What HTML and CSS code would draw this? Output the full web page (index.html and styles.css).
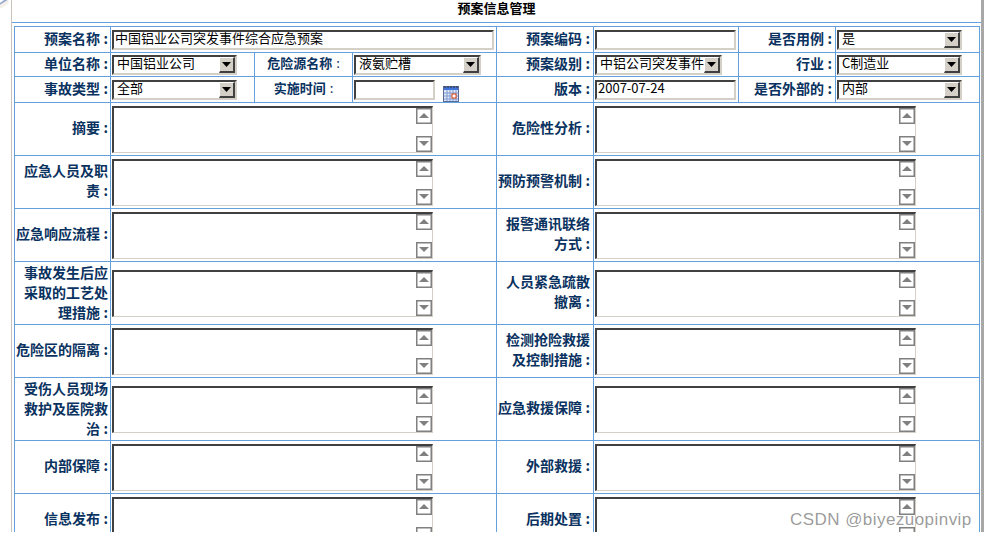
FILE: index.html
```html
<!DOCTYPE html>
<html lang="zh-CN">
<head>
<meta charset="utf-8">
<title>预案信息管理</title>
<link rel="stylesheet" href="styles.css">
</head>
<body>
<div class="screen">
  <div class="gutter">
    <svg class="corner" width="10" height="8" viewBox="0 0 10 8"><path d="M0 5 L8 0 L4 0 L0 3Z" fill="#9aa8d0"/><path d="M0 5 L8 0 L9 3 L2 8 L0 8Z" fill="#f4f2e8"/></svg>
  </div>
  <main class="panel">
    <h1 class="title">预案信息管理</h1>
    <table class="form">
      <colgroup>
        <col class="c96"><col class="c144"><col class="c98"><col class="c144"><col class="c97"><col class="c145"><col class="c97"><col class="c144">
      </colgroup>
      <tr class="h26">
        <th>预案名称&#8197;:</th>
        <td colspan="3"><input class="inp w382" value="中国铝业公司突发事件综合应急预案"></td>
        <th>预案编码&#8197;:</th>
        <td><input class="inp w141" value=""></td>
        <th>是否用例&#8197;:</th>
        <td><div class="sel w125"><select><option>是</option></select><span class="drop"><svg width="9" height="5" viewBox="0 0 9 5"><path d="M0 0H9L4.5 5Z"/></svg></span></div></td>
      </tr>
      <tr class="h24">
        <th>单位名称&#8197;:</th>
        <td><div class="sel w125"><select><option>中国铝业公司</option></select><span class="drop"><svg width="9" height="5" viewBox="0 0 9 5"><path d="M0 0H9L4.5 5Z"/></svg></span></div></td>
        <th class="mid">危险源名称<span class="thin">:</span></th>
        <td><div class="sel w127"><select><option>液氨贮槽</option></select><span class="drop"><svg width="9" height="5" viewBox="0 0 9 5"><path d="M0 0H9L4.5 5Z"/></svg></span></div></td>
        <th>预案级别&#8197;:</th>
        <td><div class="sel w127"><select><option>中铝公司突发事件</option></select><span class="drop"><svg width="9" height="5" viewBox="0 0 9 5"><path d="M0 0H9L4.5 5Z"/></svg></span></div></td>
        <th>行业&#8197;:</th>
        <td><div class="sel w125"><select><option>C制造业</option></select><span class="drop"><svg width="9" height="5" viewBox="0 0 9 5"><path d="M0 0H9L4.5 5Z"/></svg></span></div></td>
      </tr>
      <tr class="h26">
        <th>事故类型&#8197;:</th>
        <td><div class="sel w125"><select><option>全部</option></select><span class="drop"><svg width="9" height="5" viewBox="0 0 9 5"><path d="M0 0H9L4.5 5Z"/></svg></span></div></td>
        <th class="mid">实施时间<span class="thin">:</span></th>
        <td>
          <div class="date">
            <input class="inp w81" value="">
            <svg class="cal" width="16" height="16" viewBox="0 0 16 16">
              <rect x="0.5" y="0.5" width="15" height="15" fill="#dfe8f8" stroke="#5a6a9a"/>
              <rect x="1" y="1" width="14" height="3" fill="#3f73d8"/>
              <path d="M1 7H15M1 10H15M1 13H15M4 4V15M7 4V15M10 4V15M13 4V15" stroke="#7f9ad0" stroke-width="1"/>
              <rect x="9" y="8" width="4" height="4" fill="#fff" stroke="#e0400c"/>
              <path d="M2 0V2M5 0V2M8 0V2M11 0V2M14 0V2" stroke="#333"/>
            </svg>
          </div>
        </td>
        <th>版本&#8197;:</th>
        <td><input class="inp w141" value="2007-07-24"></td>
        <th>是否外部的&#8197;:</th>
        <td><div class="sel w125"><select><option>内部</option></select><span class="drop"><svg width="9" height="5" viewBox="0 0 9 5"><path d="M0 0H9L4.5 5Z"/></svg></span></div></td>
      </tr>
      <tr class="h53">
        <th>摘要&#8197;:</th>
        <td colspan="3"><div class="area"><textarea></textarea><div class="bar"><span class="btn"><svg width="10" height="5" viewBox="0 0 10 5"><path d="M5 0L10 5H0Z"/></svg></span><span class="btn"><svg width="10" height="5" viewBox="0 0 10 5"><path d="M0 0H10L5 5Z"/></svg></span></div></div></td>
        <th>危险性分析&#8197;:</th>
        <td colspan="3"><div class="area"><textarea></textarea><div class="bar"><span class="btn"><svg width="10" height="5" viewBox="0 0 10 5"><path d="M5 0L10 5H0Z"/></svg></span><span class="btn"><svg width="10" height="5" viewBox="0 0 10 5"><path d="M0 0H10L5 5Z"/></svg></span></div></div></td>
      </tr>
      <tr class="h53">
        <th>应急人员及职责&#8197;:</th>
        <td colspan="3"><div class="area"><textarea></textarea><div class="bar"><span class="btn"><svg width="10" height="5" viewBox="0 0 10 5"><path d="M5 0L10 5H0Z"/></svg></span><span class="btn"><svg width="10" height="5" viewBox="0 0 10 5"><path d="M0 0H10L5 5Z"/></svg></span></div></div></td>
        <th>预防预警机制&#8197;:</th>
        <td colspan="3"><div class="area"><textarea></textarea><div class="bar"><span class="btn"><svg width="10" height="5" viewBox="0 0 10 5"><path d="M5 0L10 5H0Z"/></svg></span><span class="btn"><svg width="10" height="5" viewBox="0 0 10 5"><path d="M0 0H10L5 5Z"/></svg></span></div></div></td>
      </tr>
      <tr class="h53">
        <th>应急响应流程&#8197;:</th>
        <td colspan="3"><div class="area"><textarea></textarea><div class="bar"><span class="btn"><svg width="10" height="5" viewBox="0 0 10 5"><path d="M5 0L10 5H0Z"/></svg></span><span class="btn"><svg width="10" height="5" viewBox="0 0 10 5"><path d="M0 0H10L5 5Z"/></svg></span></div></div></td>
        <th>报警通讯联络方式&#8197;:</th>
        <td colspan="3"><div class="area"><textarea></textarea><div class="bar"><span class="btn"><svg width="10" height="5" viewBox="0 0 10 5"><path d="M5 0L10 5H0Z"/></svg></span><span class="btn"><svg width="10" height="5" viewBox="0 0 10 5"><path d="M0 0H10L5 5Z"/></svg></span></div></div></td>
      </tr>
      <tr class="h63">
        <th class="tall">事故发生后应采取的工艺处理措施&#8197;:</th>
        <td colspan="3"><div class="area"><textarea></textarea><div class="bar"><span class="btn"><svg width="10" height="5" viewBox="0 0 10 5"><path d="M5 0L10 5H0Z"/></svg></span><span class="btn"><svg width="10" height="5" viewBox="0 0 10 5"><path d="M0 0H10L5 5Z"/></svg></span></div></div></td>
        <th>人员紧急疏散撤离&#8197;:</th>
        <td colspan="3"><div class="area"><textarea></textarea><div class="bar"><span class="btn"><svg width="10" height="5" viewBox="0 0 10 5"><path d="M5 0L10 5H0Z"/></svg></span><span class="btn"><svg width="10" height="5" viewBox="0 0 10 5"><path d="M0 0H10L5 5Z"/></svg></span></div></div></td>
      </tr>
      <tr class="h53">
        <th>危险区的隔离&#8197;:</th>
        <td colspan="3"><div class="area"><textarea></textarea><div class="bar"><span class="btn"><svg width="10" height="5" viewBox="0 0 10 5"><path d="M5 0L10 5H0Z"/></svg></span><span class="btn"><svg width="10" height="5" viewBox="0 0 10 5"><path d="M0 0H10L5 5Z"/></svg></span></div></div></td>
        <th>检测抢险救援及控制措施&#8197;:</th>
        <td colspan="3"><div class="area"><textarea></textarea><div class="bar"><span class="btn"><svg width="10" height="5" viewBox="0 0 10 5"><path d="M5 0L10 5H0Z"/></svg></span><span class="btn"><svg width="10" height="5" viewBox="0 0 10 5"><path d="M0 0H10L5 5Z"/></svg></span></div></div></td>
      </tr>
      <tr class="h63">
        <th class="tall">受伤人员现场救护及医院救治&#8197;:</th>
        <td colspan="3"><div class="area"><textarea></textarea><div class="bar"><span class="btn"><svg width="10" height="5" viewBox="0 0 10 5"><path d="M5 0L10 5H0Z"/></svg></span><span class="btn"><svg width="10" height="5" viewBox="0 0 10 5"><path d="M0 0H10L5 5Z"/></svg></span></div></div></td>
        <th>应急救援保障&#8197;:</th>
        <td colspan="3"><div class="area"><textarea></textarea><div class="bar"><span class="btn"><svg width="10" height="5" viewBox="0 0 10 5"><path d="M5 0L10 5H0Z"/></svg></span><span class="btn"><svg width="10" height="5" viewBox="0 0 10 5"><path d="M0 0H10L5 5Z"/></svg></span></div></div></td>
      </tr>
      <tr class="h53">
        <th>内部保障&#8197;:</th>
        <td colspan="3"><div class="area"><textarea></textarea><div class="bar"><span class="btn"><svg width="10" height="5" viewBox="0 0 10 5"><path d="M5 0L10 5H0Z"/></svg></span><span class="btn"><svg width="10" height="5" viewBox="0 0 10 5"><path d="M0 0H10L5 5Z"/></svg></span></div></div></td>
        <th>外部救援&#8197;:</th>
        <td colspan="3"><div class="area"><textarea></textarea><div class="bar"><span class="btn"><svg width="10" height="5" viewBox="0 0 10 5"><path d="M5 0L10 5H0Z"/></svg></span><span class="btn"><svg width="10" height="5" viewBox="0 0 10 5"><path d="M0 0H10L5 5Z"/></svg></span></div></div></td>
      </tr>
      <tr class="h53">
        <th>信息发布&#8197;:</th>
        <td colspan="3"><div class="area"><textarea></textarea><div class="bar"><span class="btn"><svg width="10" height="5" viewBox="0 0 10 5"><path d="M5 0L10 5H0Z"/></svg></span><span class="btn"><svg width="10" height="5" viewBox="0 0 10 5"><path d="M0 0H10L5 5Z"/></svg></span></div></div></td>
        <th>后期处置&#8197;:</th>
        <td colspan="3"><div class="area"><textarea></textarea><div class="bar"><span class="btn"><svg width="10" height="5" viewBox="0 0 10 5"><path d="M5 0L10 5H0Z"/></svg></span><span class="btn"><svg width="10" height="5" viewBox="0 0 10 5"><path d="M0 0H10L5 5Z"/></svg></span></div></div></td>
      </tr>
    </table>
    <div class="mark">CSDN @biyezuopinvip</div>
  </main>
</div>
</body>
</html>
```
FILE: styles.css
```css
html, body { margin: 0; padding: 0; background: #fff; }
body { font-family: "Noto Sans CJK SC", "Liberation Sans", sans-serif; overflow: hidden; }
.screen { display: flex; height: 532px; width: 985px; overflow: hidden; position: relative; }
.gutter { width: 11px; flex: none; }
.corner { display: block; }
.panel { flex: none; width: 969px; height: 532px; border-left: 1px solid #c8c4bc; border-right: 3px solid #a8a8a8; overflow: hidden; }
.title { margin: 0; height: 22px; border-bottom: 1px solid #64a0dc; font-size: 13px; line-height: 16px; font-weight: 700; text-align: center; color: #000; }
.form { border-collapse: collapse; table-layout: fixed; width: 966px; margin: 3px 0 0 2px; }
.form th, .form td { border: 1px solid #64a0dc; padding: 0; vertical-align: middle; }
.form th { text-align: right; padding: 0 3px 4px 0; font-size: 14px; line-height: 20px; font-weight: 700; color: #0a3260; }
.form th:first-child { padding-right: 2px; }
.form .h24 th { padding-bottom: 3px; }
.form th.tall { padding-bottom: 2px; }
.form th.mid { text-align: center; font-size: 13px; padding-right: 0; }
.thin { font-weight: 400; padding-left: 4px; }
.form td { padding-left: 1px; text-align: left; }
.c96 { width: 96px; } .c97 { width: 97px; } .c98 { width: 98px; } .c144 { width: 144px; } .c145 { width: 145px; }
.h24 { height: 24px; } .h26 { height: 26px; } .h53 { height: 53px; } .h63 { height: 63px; }
.inp, .sel, .area { box-sizing: border-box; border-style: solid; border-color: #404040 #d4d0c8 #d4d0c8 #404040; border-width: 2px; background: #fff; }
.inp { display: block; height: 20px; padding: 0 1px 4px; font: 13px/13px "Noto Sans CJK SC", "Liberation Sans", sans-serif; color: #000; outline: none; }
.w382 { width: 382px; } .w141 { width: 141px; } .w125 { width: 125px; } .w127 { width: 127px; } .w81 { width: 81px; }
.sel { display: flex; height: 20px; align-items: stretch; }
.sel select { flex: 1; min-width: 0; appearance: none; -webkit-appearance: none; border: 0; outline: 0; background: transparent; padding: 0 0 0 3px; margin: -4px 0 0; font: 13px/16px "Noto Sans CJK SC", "Liberation Sans", sans-serif; color: #000; }
.drop { box-sizing: border-box; flex: none; width: 16px; display: flex; align-items: center; justify-content: center; background: #d4d0c8; border-style: solid; border-width: 1px 2px 2px 1px; border-color: #fff #404040 #404040 #fff; }
.drop path { fill: #000; }
.date { display: flex; align-items: flex-start; gap: 8px; }
.cal { margin: 6px 0 -6px; flex: none; }
.area { display: flex; width: 321px; height: 47px; border-width: 2px 1px 1px 2px; margin: 0; }
.area textarea { flex: 1; min-width: 0; border: 0; outline: 0; resize: none; padding: 0; margin: 0; background: #fff; }
.bar { flex: none; width: 16px; display: flex; flex-direction: column; justify-content: space-between; }
.btn { box-sizing: border-box; width: 16px; height: 16px; border: 1px solid #808080; display: flex; align-items: center; justify-content: center; background: #fff; box-shadow: inset 0 0 0 0.5px #808080; }
.btn path { fill: #808080; }
.mark { position: absolute; left: 790px; top: 510px; font: 17px/20px "Liberation Sans", sans-serif; letter-spacing: 0.45px; color: rgba(90, 90, 90, 0.62); white-space: nowrap; }
```
